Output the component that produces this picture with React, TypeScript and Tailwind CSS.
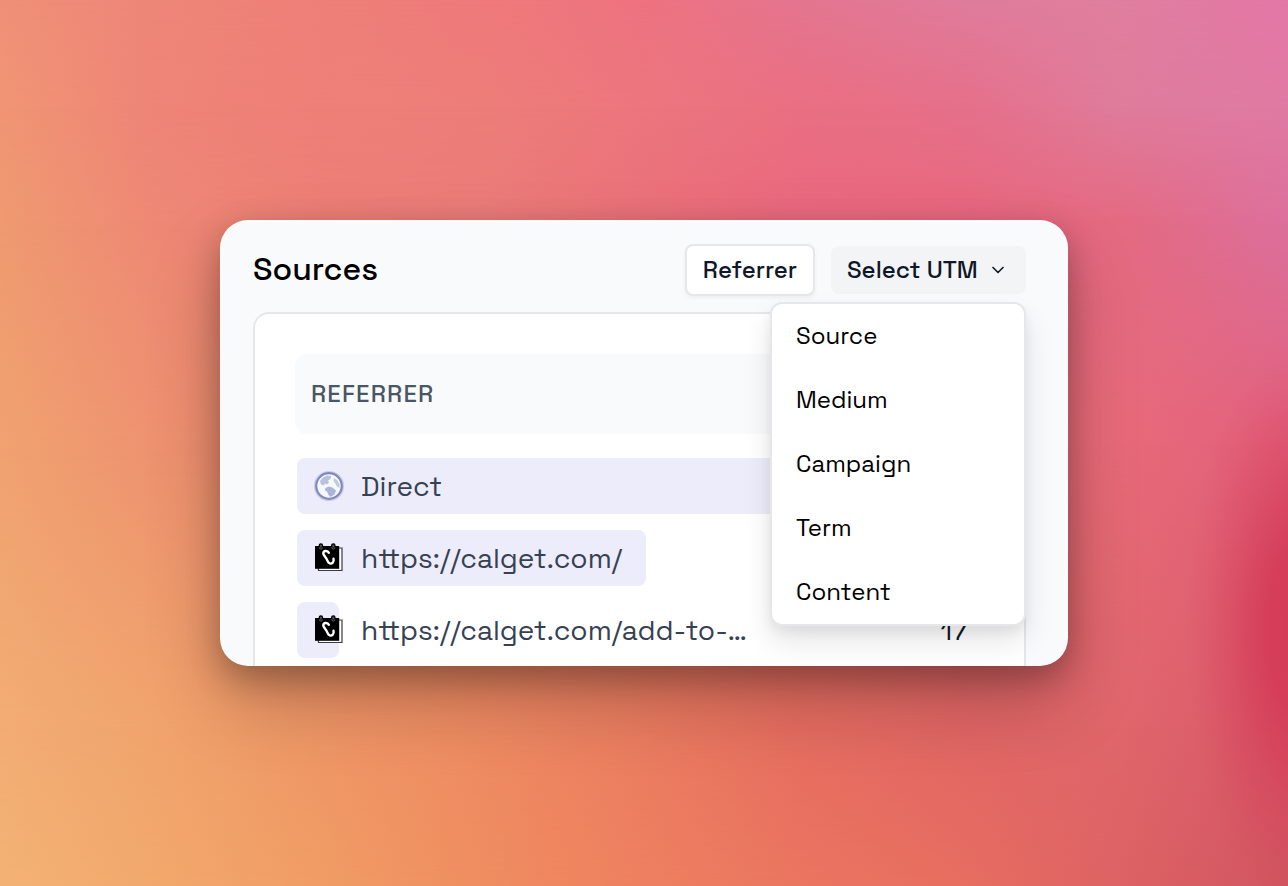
import { useState } from 'react';
import { ChevronDown } from 'lucide-react';

interface SourceRow {
  name: string;
  icon: 'globe' | 'calget';
  share: number;
  count?: number;
}

const rows: SourceRow[] = [
  { name: 'Direct', icon: 'globe', share: 100 },
  { name: 'https://calget.com/', icon: 'calget', share: 59 },
  { name: 'https://calget.com/add-to-…', icon: 'calget', share: 7.1, count: 17 },
];

const utmOptions = ['Source', 'Medium', 'Campaign', 'Term', 'Content'];

function GlobeIcon() {
  return (
    <svg viewBox="0 0 32 32" className="w-8 h-8 shrink-0" aria-hidden="true">
      <circle cx="16" cy="16" r="14.4" fill="none" stroke="#c9cce8" strokeWidth="1.4" />
      <circle cx="16" cy="16" r="12.8" fill="#f6f8fc" stroke="#8088bd" strokeWidth="2.2" />
      <path d="M7 11l3-3.500 4-2 4 .5-.5 3-2.500 1.500 1 2-2 2-2-1-1 2-3-1z" fill="#b9c2dd" />
      <path d="m12.500 18 3-1.500 4 1 3.500 3-1.500 4-4 2.500-2-2-1.500-3.500-2-1z" fill="#abb5d6" />
      <path d="m21 8 3 2 2.500 4v4l-2.500-1.500-2-3.500-1.500-2z" fill="#c2cae2" />
    </svg>
  );
}

function CalgetIcon() {
  return (
    <svg viewBox="0 0 32 32" className="w-8 h-8 shrink-0" aria-hidden="true">
      <path d="M5.500 6h23.500v22.500h-23.500z" fill="#fff" stroke="#3a3a3a" strokeWidth="1.2" />
      <path d="M2 4h24.200v22.800H2z" fill="#000" />
      <path
        d="M6.300 5.500V3.400a1.600 1.600 0 0 1 3.200 0V5.500M18.700 5.500V3.400a1.600 1.600 0 0 1 3.200 0V5.500"
        fill="#555"
        stroke="#000"
        strokeWidth="1.300"
      />
      <path d="M6.300 5.500a1.600 1.600 0 0 0 3.200 0M18.700 5.500a1.600 1.600 0 0 0 3.200 0" fill="none" stroke="#888" strokeWidth=".7" />
      <path
        d="M15.800 10.800C14.800 8.200 10.400 8.300 10.300 11.300C10.300 13.500 13.600 15.800 14.400 18.500C15.200 21.600 18 22.400 19.600 20.900C20.800 19.800 20.900 18.300 20.500 16.600"
        fill="none"
        stroke="#fff"
        strokeWidth="2.400"
        strokeLinecap="round"
      />
    </svg>
  );
}

function Backdrop() {
  return (
    <div className="absolute inset-0 -z-10" aria-hidden="true">
      <div className="absolute inset-0 bg-[linear-gradient(90deg,#f09078_0%,#ee8678_12%,#ee7f78_25%,#ef7a7b_38%,#ee7280_50%,#e4758f_62%,#e07c9c_75%,#e07f9f_87%,#e477a6_100%)]" />
      <div className="absolute inset-0 bg-[linear-gradient(90deg,#f09574_0%,#ee8477_12%,#ee7f78_25%,#ed7d79_38%,#ec767e_50%,#ea6f82_62%,#e5708a_75%,#df7c9c_87%,#e07aa3_100%)] [mask-image:linear-gradient(transparent_0%,black_12%)]" />
      <div className="absolute inset-0 bg-[linear-gradient(90deg,#ef9a70_0%,#ee8875_12%,#ec7e76_25%,#ea7b78_38%,#ea7078_50%,#e9687e_62%,#e8677e_75%,#e46a82_87%,#dc709c_100%)] [mask-image:linear-gradient(transparent_12%,black_25%)]" />
      <div className="absolute inset-0 bg-[linear-gradient(90deg,#f0a270_0%,#ee9270_12%,#ec826c_30%,#e97468_60%,#e76a79_87%,#e2607c_100%)] [mask-image:linear-gradient(transparent_25%,black_50%)]" />
      <div className="absolute inset-0 bg-[linear-gradient(90deg,#f2ad74_0%,#f0a46c_12%,#ef9666_25%,#ee8a62_38%,#ea7c60_50%,#e66d60_62%,#e16665_75%,#df666b_87%,#d9586a_100%)] [mask-image:linear-gradient(transparent_50%,black_82%)]" />
      <div className="absolute inset-0 bg-[linear-gradient(90deg,#f3b274_0%,#f2a86c_12%,#f09c64_25%,#ef8c60_38%,#ee8060_50%,#ea7560_62%,#e66e60_75%,#dc6264_87%,#d05560_100%)] [mask-image:linear-gradient(transparent_82%,black_100%)]" />
      <div className="absolute inset-0 bg-[radial-gradient(ellipse_9%_32%_at_101%_71%,#d43a56_0%,#d43a56dd_30%,#d43a5666_60%,#d43a561a_85%,#d43a5600_100%)]" />
    </div>
  );
}

export default function App() {
  const [open, setOpen] = useState(true);
  const [selected, setSelected] = useState('Referrer');

  return (
    <main className="relative isolate flex min-h-screen items-center justify-center overflow-hidden p-6 font-['Space_Grotesk',Inter,sans-serif]">
      <Backdrop />

      <section className="w-full max-w-[848px] overflow-hidden rounded-[28px] bg-[#f9fafc] pt-6 pl-[33px] pr-[42px] shadow-[0_36px_72px_rgba(0,0,0,0.22),0_12px_32px_rgba(0,0,0,0.26)]">
        <div className="relative z-10 flex h-[52px] items-center justify-between">
          <h1 className="pb-0.5 text-[32px] leading-10 font-medium text-black">Sources</h1>

          <div className="flex items-center gap-4">
            <button
              onClick={() => setSelected('Referrer')}
              className="flex h-[52px] w-[130px] items-center justify-center rounded-lg border-2 border-gray-200 bg-white text-2xl font-medium text-gray-900 shadow-[0_2px_4px_rgba(0,0,0,0.05)]"
            >
              Referrer
            </button>

            <div className="relative">
              <button
                aria-haspopup="menu"
                aria-expanded={open}
                onClick={() => setOpen(!open)}
                className="flex h-12 w-[195px] items-center justify-between rounded-lg bg-gray-100 pl-4 pr-[18px] text-2xl font-medium whitespace-nowrap text-gray-900"
              >
                Select UTM
                <ChevronDown className="w-5 h-5" strokeWidth={2} />
              </button>

              {open && (
                <div
                  role="menu"
                  className="absolute top-full right-0 mt-2 w-64 overflow-hidden rounded-xl border-2 border-gray-200 bg-white shadow-[0_16px_30px_rgba(0,0,0,0.1),0_6px_12px_rgba(0,0,0,0.06)]"
                >
                  {utmOptions.map((option) => (
                    <button
                      key={option}
                      role="menuitem"
                      aria-current={selected === option}
                      onClick={() => {
                        setSelected(option);
                        setOpen(false);
                      }}
                      className="flex h-16 w-full items-center px-6 text-2xl text-black hover:bg-gray-50"
                    >
                      {option}
                    </button>
                  ))}
                </div>
              )}
            </div>
          </div>
        </div>

        <div className="mt-4 rounded-t-2xl border-2 border-b-0 border-gray-200 bg-white px-10 pt-10">
          <table className="w-full table-fixed">
            <colgroup>
              <col />
              <col className="w-24" />
            </colgroup>
            <thead>
              <tr>
                <th colSpan={2} className="p-0 pb-6 text-left">
                  <div className="flex h-20 items-center rounded-xl bg-[#f9fafc] px-4 text-2xl font-medium tracking-wider text-gray-600">
                    REFERRER
                  </div>
                </th>
              </tr>
            </thead>
            <tbody>
              {rows.map((row) => (
                <tr key={row.name} className="group">
                  <td className="p-0 pb-4 pl-0.5 group-last:pb-2">
                    <div className="relative flex h-14 items-center px-4">
                      <div
                        className="absolute inset-y-0 left-0 rounded-lg bg-[#edecfa]"
                        style={{ width: `${row.share}%` }}
                      />
                      <div className="relative flex items-center gap-4 text-[28px] leading-10 whitespace-nowrap text-gray-700">
                        {row.icon === 'globe' ? <GlobeIcon /> : <CalgetIcon />}
                        <span>{row.name}</span>
                      </div>
                    </div>
                  </td>
                  <td className="p-0 pr-4 pb-4 text-right text-[28px] leading-10 text-gray-900 group-last:pb-2">
                    {row.count}
                  </td>
                </tr>
              ))}
            </tbody>
          </table>
        </div>
      </section>
    </main>
  );
}
